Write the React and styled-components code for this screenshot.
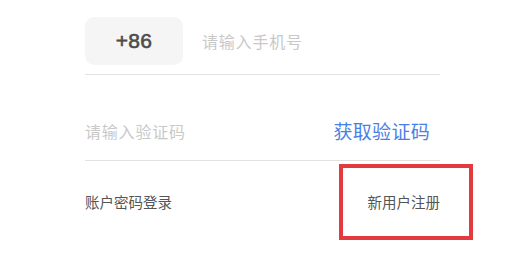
import React from "react";
import styled, { createGlobalStyle } from "styled-components";

const GlobalStyle = createGlobalStyle`
  body {
    margin: 0;
    background: #ffffff;
    font-family: "Noto Sans CJK SC", "Liberation Sans", sans-serif;
  }
`;

function App() {
    return (
        <>
            <GlobalStyle />
            <Form>
                <PhoneRow>
                    <CountryCode>+86</CountryCode>
                    <Field placeholder="请输入手机号" />
                </PhoneRow>
                <CodeRow>
                    <Field placeholder="请输入验证码" />
                    <SendCode>获取验证码</SendCode>
                </CodeRow>
                <Footer>
                    <FooterLink>账户密码登录</FooterLink>
                    <FooterLink marked>新用户注册</FooterLink>
                </Footer>
            </Form>
        </>
    );
}

const Form = styled.div`
    width: 355px;
    min-height: 255px;
    margin-left: 85px;
    display: flex;
    flex-direction: column;
`

const PhoneRow = styled.div`
    display: flex;
    align-items: center;
    gap: 19px;
    padding-top: 17px;
    padding-bottom: 9px;
    border-bottom: 1.5px solid #e2e2e2;
`

const CountryCode = styled.div`
    width: 98px;
    height: 48px;
    border-radius: 9px;
    background-color: #f5f5f5;
    display: flex;
    justify-content: center;
    align-items: center;
    font-family: "Liberation Sans", Arial, sans-serif;
    font-size: 21px;
    font-weight: normal;
    -webkit-text-stroke: 0.6px #4c4c4c;
    color: #4c4c4c;
    letter-spacing: 0.3px;
`

const Field = styled.input`
    flex: 1;
    min-width: 0;
    border: none;
    outline: none;
    padding: 0;
    background: transparent;
    font-family: "Noto Sans CJK SC", sans-serif;
    font-size: 16px;
    letter-spacing: 0.8px;
    color: #333;

    &::placeholder {
        color: #c9c9c9;
    }
`

const CodeRow = styled.div`
    height: 86px;
    display: flex;
    align-items: flex-end;
    padding-bottom: 17px;
    box-sizing: border-box;
    border-bottom: 1.5px solid #e2e2e2;

    & > * {
        line-height: 24px;
    }
`

const SendCode = styled.span`
    font-size: 19px;
    color: #4a7fe6;
    letter-spacing: 0.3px;
    margin-right: 10px;
    cursor: pointer;
`

const Footer = styled.div`
    display: flex;
    justify-content: space-between;
    align-items: center;
    padding-top: 31px;
    padding-bottom: 40px;
`

const FooterLink = styled.span`
    position: relative;
    display: block;
    height: 20px;
    font-size: 14.5px;
    line-height: 20px;
    color: #555;
    cursor: pointer;

    ${(props) => props.marked && `
        &::after {
            content: "";
            position: absolute;
            display: block;
            box-sizing: border-box;
            left: -29px;
            width: calc(100% + 62px);
            top: -28px;
            height: 76px;
            border: 4px solid #e23a3f;
        }
    `}
`

export default App;
